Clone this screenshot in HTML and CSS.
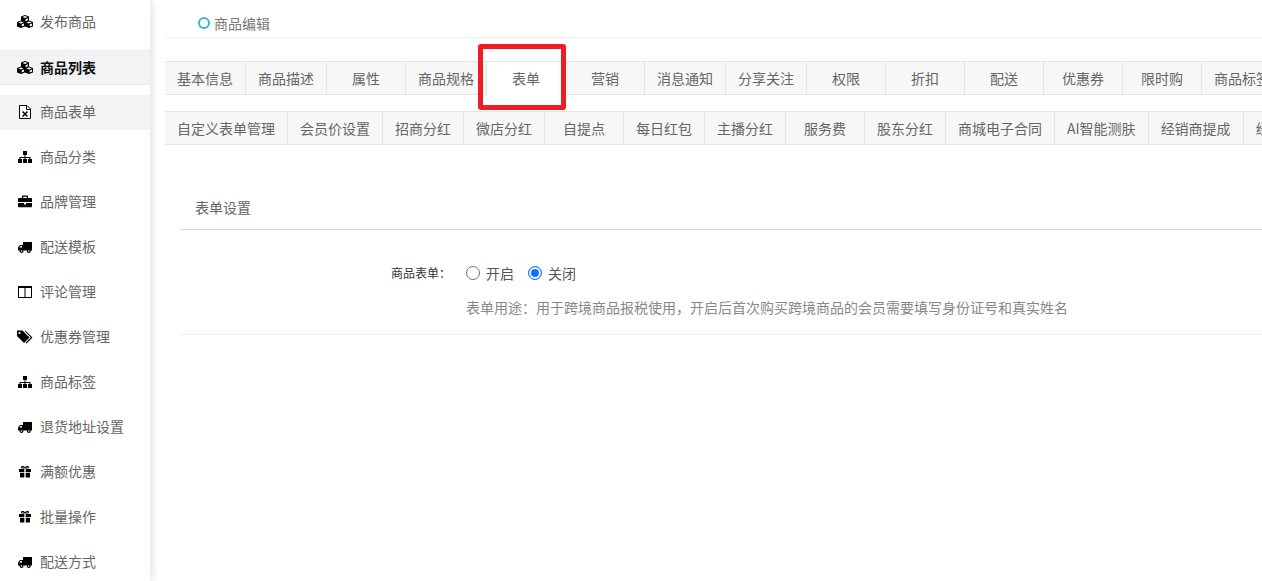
FILE: index.html
```html
<!DOCTYPE html>
<html lang="zh-CN">
<head>
<meta charset="utf-8">
<title>商品编辑</title>
<link rel="stylesheet" href="styles.css">
</head>
<body>
<svg class="defs" width="0" height="0" aria-hidden="true">
  <defs>
    <symbol id="i-cubes" viewBox="0 0 18 14">
      <path d="M9 0 13 1.600V5.400L17 7V11.400L13 13 9 11.400 5 13 1 11.400V7L5 5.400V1.600Z" fill="#000"/>
      <path d="M9 1.100 11.500 2.100 9 3.100 6.500 2.100ZM5 6.500 7.500 7.500 5 8.500 2.500 7.500ZM13 6.500 15.500 7.500 13 8.500 10.500 7.500Z" fill="#fff"/>
      <path d="M9.500 4.200V6.300L11.800 5.300V3.300ZM5.700 9.500V11.600L8 10.600V8.600ZM13.700 9.500V11.600L16 10.600V8.600Z" fill="#fff"/>
    </symbol>
    <symbol id="i-file" viewBox="0 0 18 14">
      <path d="M3.500.5H11L14.500 4V13.500H3.500Z" fill="#fff" stroke="#000"/>
      <path d="M10.500.5V4.500H14.500" fill="none" stroke="#000"/>
      <path d="M6.500 6.500 11.500 11.500M11.500 6.500 6.500 11.500" fill="none" stroke="#000" stroke-width="1.500"/>
    </symbol>
    <symbol id="i-sitemap" viewBox="0 0 18 14">
      <path d="M7 1H11V5H9.500V7H14.500V9H16V13H12V9H13.500V8H9.500V9H11V13H7V9H8.500V8H4.500V9H6V13H2V9H3.500V7H8.500V5H7Z" fill="#000"/>
    </symbol>
    <symbol id="i-briefcase" viewBox="0 0 18 14">
      <path fill-rule="evenodd" d="M6 3V.5H12V3H15C15.600 3 16 3.400 16 4V7H2V4C2 3.400 2.400 3 3 3ZM7.200 3H10.800V1.700H7.200ZM2 8H8V9.500H10V8H16V11.300C16 11.800 15.600 12.300 15 12.300H3C2.400 12.300 2 11.800 2 11.300Z" fill="#000"/>
    </symbol>
    <symbol id="i-truck" viewBox="0 0 18 14">
      <path fill-rule="evenodd" d="M7 2H16V10.500H2V7.500L4 5H7ZM4.500 6 3.200 7.600H6V6Z" fill="#000"/>
      <circle cx="5.500" cy="11" r="2" fill="#000"/>
      <circle cx="12.800" cy="11" r="2" fill="#000"/>
      <circle cx="5.500" cy="11" r=".8" fill="#fff"/>
      <circle cx="12.800" cy="11" r=".8" fill="#fff"/>
    </symbol>
    <symbol id="i-columns" viewBox="0 0 18 14">
      <path fill-rule="evenodd" d="M2 1H16V13H2ZM3 3V12H8.500V3ZM9.500 3V12H15V3Z" fill="#000"/>
    </symbol>
    <symbol id="i-tags" viewBox="0 0 18 14">
      <path d="M1 .5H6.500L13.500 7.500 8 13 1 6Z" fill="#000"/>
      <path d="M8.500.5H9.500L16.500 7.500 10.500 13.500 9.500 12.800 14.800 7.500Z" fill="#000"/>
      <circle cx="3.500" cy="3" r="1.100" fill="#fff"/>
    </symbol>
    <symbol id="i-gift" viewBox="0 0 18 14">
      <path fill-rule="evenodd" d="M3 4H8.300V7H3ZM9.700 4H15V7H9.700ZM4 7.800H8.300V12.500H4ZM9.700 7.800H14V12.500H9.700ZM9 3.200C7 3.800 5 3.500 5 2.200 5 .6 8 .7 9 2.500 10 .7 13 .6 13 2.200 13 3.500 11 3.800 9 3.200ZM8 2.700C7.500 2 6.200 1.600 6.200 2.200 6.200 2.800 7.400 2.800 8 2.700ZM10 2.700C10.600 2.800 11.800 2.800 11.800 2.200 11.800 1.600 10.500 2 10 2.700Z" fill="#000"/>
    </symbol>
  </defs>
</svg>
<div class="page">
  <aside class="sidebar">
    <a class="nav-item"><svg class="nav-icon"><use href="#i-cubes"/></svg>发布商品</a>
    <a class="nav-item nav-current"><svg class="nav-icon"><use href="#i-cubes"/></svg>商品列表</a>
    <a class="nav-item nav-hover"><svg class="nav-icon"><use href="#i-file"/></svg>商品表单</a>
    <a class="nav-item"><svg class="nav-icon"><use href="#i-sitemap"/></svg>商品分类</a>
    <a class="nav-item"><svg class="nav-icon"><use href="#i-briefcase"/></svg>品牌管理</a>
    <a class="nav-item"><svg class="nav-icon"><use href="#i-truck"/></svg>配送模板</a>
    <a class="nav-item"><svg class="nav-icon"><use href="#i-columns"/></svg>评论管理</a>
    <a class="nav-item"><svg class="nav-icon"><use href="#i-tags"/></svg>优惠券管理</a>
    <a class="nav-item"><svg class="nav-icon"><use href="#i-sitemap"/></svg>商品标签</a>
    <a class="nav-item"><svg class="nav-icon"><use href="#i-truck"/></svg>退货地址设置</a>
    <a class="nav-item"><svg class="nav-icon"><use href="#i-gift"/></svg>满额优惠</a>
    <a class="nav-item"><svg class="nav-icon"><use href="#i-gift"/></svg>批量操作</a>
    <a class="nav-item"><svg class="nav-icon"><use href="#i-truck"/></svg>配送方式</a>
  </aside>
  <main class="main">
    <div class="crumb"><span class="crumb-dot"></span>商品编辑</div>
    <ul class="tabs tabs-first">
      <li>基本信息</li><li>商品描述</li><li>属性</li><li>商品规格</li><li class="active">表单</li><li>营销</li><li>消息通知</li><li>分享关注</li><li>权限</li><li>折扣</li><li>配送</li><li>优惠券</li><li>限时购</li><li>商品标签</li>
    </ul>
    <ul class="tabs tabs-second">
      <li>自定义表单管理</li><li>会员价设置</li><li>招商分红</li><li>微店分红</li><li>自提点</li><li>每日红包</li><li>主播分红</li><li>服务费</li><li>股东分红</li><li>商城电子合同</li><li>AI智能测肤</li><li>经销商提成</li><li>经销商等级</li>
    </ul>
    <section class="panel">
      <h2 class="panel-title">表单设置</h2>
      <div class="form-row">
        <div class="form-label">商品表单：</div>
        <div class="form-body">
          <div class="radios">
            <label class="radio"><span class="radio-dot"></span>开启</label>
            <label class="radio"><span class="radio-dot radio-on"></span>关闭</label>
          </div>
          <p class="help">表单用途：用于跨境商品报税使用，开启后首次购买跨境商品的会员需要填写身份证号和真实姓名</p>
        </div>
      </div>
    </section>
  </main>
</div>
<div class="highlight"></div>
</body>
</html>
```
FILE: styles.css
```css
* { box-sizing: border-box; }
html, body { margin: 0; height: 100%; overflow: hidden; }
body {
  font-family: "Noto Sans CJK SC", "Liberation Sans", sans-serif;
  font-size: 14px;
  color: #666;
  background: #fff;
}
.defs { position: absolute; }
.page { display: flex; height: 581px; }
.sidebar {
  flex: none;
  width: 150px;
  padding-top: 5px;
  overflow: hidden;
  background: #fff;
  box-shadow: 2px 0 8px rgba(0, 0, 0, .12);
}
.nav-item {
  display: flex;
  align-items: center;
  height: 35px;
  margin-bottom: 10px;
  padding: 0 0 3px 16px;
  line-height: 32px;
  color: #666;
  white-space: nowrap;
}
.nav-icon { flex: none; width: 18px; height: 14px; margin: 2px 6px 0 0; }
.nav-current {
  padding-bottom: 2px;
  background: #f3f3f5;
  border-top: 1px solid #ebebf0;
  border-bottom: 1px solid #ebebf0;
  color: #111;
  font-weight: 700;
}
.nav-hover { background: #f3f3f3; }
.main { flex: 1; min-width: 0; padding-left: 15px; overflow: hidden; }
.crumb {
  display: flex;
  align-items: center;
  height: 38px;
  padding: 8px 0 0 33px;
  border-bottom: 1px solid #eee;
  color: #777;
}
.crumb-dot {
  width: 12px;
  height: 12px;
  margin-right: 4px;
  border: 2px solid #3cb4d8;
  border-radius: 50%;
}
.tabs {
  display: flex;
  height: 34px;
  margin: 0;
  padding: 0;
  list-style: none;
  background: #f7f7f7;
  border-top: 1px solid #e5e5e5;
  border-bottom: 1px solid #e5e5e5;
  white-space: nowrap;
}
.tabs li {
  flex: none;
  min-width: 79px;
  padding: 0 12px;
  line-height: 32px;
  text-align: center;
  border-right: 1px solid #e5e5e5;
}
.tabs-first { margin-top: 23px; }
.tabs .active { height: 33px; min-width: 80px; margin-left: -1px; background: #fff; border-left: 1px solid #e5e5e5; }
.tabs-second { margin-top: 16px; }
.panel { margin: 47px 0 0 15px; }
.panel-title {
  height: 38px;
  margin: 0;
  padding-left: 15px;
  font-size: 14px;
  font-weight: 400;
  line-height: 30px;
  color: #666;
  border-bottom: 1px solid #ddd;
}
.form-row { display: flex; padding-bottom: 17px; border-bottom: 1px solid #eee; }
.form-label {
  flex: none;
  width: 271px;
  padding-top: 33px;
  text-align: right;
  font-size: 12px;
  line-height: 20px;
  color: #333;
}
.form-body { padding: 32px 0 0 15px; }
.radios { display: flex; gap: 14px; height: 22px; }
.radio { display: flex; align-items: center; color: #555; font-size: 14px; line-height: 22px; }
.radio-dot {
  width: 14px;
  height: 14px;
  margin-right: 6px;
  border: 1px solid #767676;
  border-radius: 50%;
  background: #fff;
}
.radio-on { border-color: #1677ff; box-shadow: inset 0 0 0 2px #fff; background: #0f73ff; }
.help { margin: 13px 0 0; line-height: 20px; color: #888; white-space: nowrap; }
.highlight {
  position: absolute;
  left: 478px;
  top: 44px;
  width: 88px;
  height: 66px;
  border: 5px solid #ee1c25;
  border-radius: 3px;
}
```
